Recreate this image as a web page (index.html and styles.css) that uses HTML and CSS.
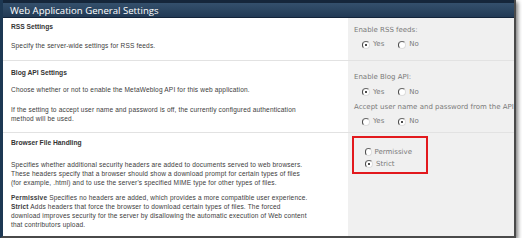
FILE: index.html
```html
<!DOCTYPE html>
<html lang="en">
<head>
    <meta charset="UTF-8">
    <title>Web Application General Settings</title>
    <link rel="stylesheet" href="styles.css">
</head>
<body>
    <div class="window">
        <div class="titlebar">
            <h1>Web Application General Settings</h1>
        </div>
        <div class="content">
            <div class="section rss">
                <div class="info">
                    <h2>RSS Settings</h2>
                    <p>Specify the server-wide settings for RSS feeds.</p>
                </div>
                <div class="controls">
                    <div class="label">Enable RSS feeds:</div>
                    <div class="options">
                        <span class="radio checked"></span><span class="opt">Yes</span>
                        <span class="radio"></span><span class="opt">No</span>
                    </div>
                </div>
            </div>
            <div class="section blog">
                <div class="info">
                    <h2>Blog API Settings</h2>
                    <p>Choose whether or not to enable the MetaWeblog API for this web application.</p>
                    <p>If the setting to accept user name and password is off, the currently configured authentication method will be used.</p>
                </div>
                <div class="controls">
                    <div class="label">Enable Blog API:</div>
                    <div class="options">
                        <span class="radio checked"></span><span class="opt">Yes</span>
                        <span class="radio"></span><span class="opt">No</span>
                    </div>
                    <div class="label">Accept user name and password from the API</div>
                    <div class="options">
                        <span class="radio"></span><span class="opt">Yes</span>
                        <span class="radio checked"></span><span class="opt">No</span>
                    </div>
                </div>
            </div>
            <div class="section files">
                <div class="info">
                    <h2>Browser File Handling</h2>
                    <p>Specifies whether additional security headers are added to documents served to web browsers. These headers specify that a browser should show a download prompt for certain types of files (for example, .html) and to use the server's specified MIME type for other types of files.</p>
                    <p><b>Permissive</b> Specifies no headers are added, which provides a more compatible user experience.<br><b>Strict</b> Adds headers that force the browser to download certain types of files. The forced download improves security for the server by disallowing the automatic execution of Web content that contributors upload.</p>
                </div>
                <div class="controls">
                    <div class="highlight">
                        <div class="choice"><span class="radio"></span><span class="opt">Permissive</span></div>
                        <div class="choice"><span class="radio checked"></span><span class="opt">Strict</span></div>
                    </div>
                </div>
            </div>
        </div>
    </div>
</body>
</html>
```

FILE: styles.css
```css
body {
    margin: 0;
    background: #fff;
    font-family: "Liberation Sans", Arial, sans-serif;
}
.window {
    width: 511px;
    height: 236px;
    display: flex;
    flex-direction: column;
    border-left: 3px solid #1d3853;
    border-right: 2px solid #4a4a4a;
    border-bottom: 2px solid #4a4a4a;
    box-shadow: 2px 2px 4px rgba(0, 0, 0, 0.5);
    overflow: hidden;
}
.titlebar {
    height: 20px;
    border-top: 3px solid #15263a;
    border-bottom: 1px solid #13243a;
    background: linear-gradient(#34506c, #223a55);
    display: flex;
    align-items: center;
}
.titlebar h1 {
    margin: 1px 0 0 7px;
    font-family: "Open Sans", sans-serif;
    font-weight: normal;
    font-size: 9.6px;
    color: #fff;
}
.content {
    flex: 1;
    display: flex;
    flex-direction: column;
}
.section {
    display: flex;
    border-bottom: 1px solid #e2e2e2;
}
.section.rss {
    height: 42px;
}
.section.blog {
    height: 71px;
}
.section.files {
    flex: 1;
    border-bottom: none;
}
.info {
    width: 300px;
    padding: 3.5px 37px 0 8px;
    color: #3c3c3c;
    font-size: 6.55px;
    line-height: 8.8px;
    letter-spacing: 0.16px;
}
.info h2 {
    margin: 0 0 11px;
    font-size: 6.7px;
    line-height: 9px;
    letter-spacing: 0;
    color: #333;
}
.info p {
    margin: 0 0 10.5px;
}
.blog .info {
    padding-top: 7px;
}
.blog .info h2 {
    margin-bottom: 9px;
}
.files .info {
    padding-top: 5px;
}
.files .info h2 {
    margin-bottom: 14px;
}
.files .info p {
    margin-bottom: 6.5px;
}
.controls {
    flex: 1;
    background: #f0f0f0;
    padding: 7.5px 0 0 6px;
    font-family: "DejaVu Sans", Verdana, sans-serif;
    font-size: 7px;
    line-height: 9px;
    color: #7a7a7a;
    white-space: nowrap;
    overflow: hidden;
}
.blog .controls {
    padding-top: 12px;
}
.files .controls {
    padding-top: 2.5px;
}
.label {
    margin-bottom: 5.5px;
}
.options {
    display: flex;
    align-items: center;
    height: 9px;
    padding-left: 8px;
    margin-bottom: 6px;
}
.opt {
    margin: 0 14px 0 3px;
}
.radio {
    width: 6px;
    height: 6px;
    border-radius: 50%;
    border-left: 1px solid #444;
    border-top: 1px solid #666;
    border-right: 1px solid #ddd;
    border-bottom: 1px solid #ddd;
    background: #fff;
    display: inline-flex;
    align-items: center;
    justify-content: center;
}
.radio.checked::after {
    content: "";
    width: 2px;
    height: 2px;
    background: #111;
    border-radius: 50%;
}
.highlight {
    width: 76px;
    height: 38px;
    margin-left: -2px;
    border: 2px solid #e2191d;
    padding: 10px 0 0 11px;
    box-sizing: border-box;
}
.choice {
    display: flex;
    align-items: center;
    height: 9px;
    margin-bottom: 3px;
}
```
